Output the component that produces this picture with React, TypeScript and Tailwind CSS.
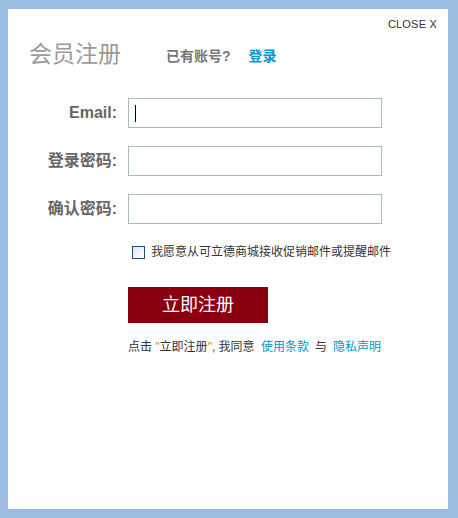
import React from 'react';

const font = { fontFamily: '"Liberation Sans", "Noto Sans CJK SC", sans-serif' };

const Field = ({ label, focused }: { label: string; focused?: boolean }) => (
  <div className="flex items-center h-[30px]">
    <label className="w-[120px] pr-[11px] text-right text-[16px] font-bold text-[#666666] leading-none">
      {label}
    </label>
    <div className="relative w-[254px] h-[30px] border border-[#a9bcbd] bg-white">
      {focused && <span className="absolute left-[6px] top-[6px] w-px h-[17px] bg-black" />}
    </div>
  </div>
);

export default function App() {
  return (
    <div className="w-[458px] h-[518px] bg-[#9bbde1] pt-[9px] pl-[8px] pr-[10px] pb-[9px]" style={font}>
      <div className="w-full h-full bg-white flex flex-col">
        {/* close */}
        <div className="flex justify-end pr-[11px] pt-[9px]">
          <button className="text-[11px] leading-[13px] text-[#333333] tracking-[0.2px]">CLOSE X</button>
        </div>

        {/* title row */}
        <div className="flex items-end pl-[21px] mt-[7px] h-[30px]">
          <h1 className="text-[23px] leading-[28px] text-[#9a9a9a] font-normal">会员注册</h1>
          <span className="ml-[45px] mb-[3px] text-[14px] font-bold text-[#777777] leading-[18px]">已有账号?</span>
          <a className="ml-[18px] mb-[3px] text-[14px] font-bold text-[#0098cc] leading-[18px]">登录</a>
        </div>

        {/* fields */}
        <div className="flex flex-col gap-[18px] mt-[30px]">
          <Field label="Email:" focused />
          <Field label="登录密码:" />
          <Field label="确认密码:" />
        </div>

        {/* newsletter */}
        <div className="flex items-center mt-[21px] ml-[124px] h-[14px]">
          <span className="w-[13px] h-[13px] border border-[#1f4e79] bg-gradient-to-br from-[#e6e6e6] to-white" />
          <span className="ml-[6px] text-[12px] text-[#333333] leading-none">我愿意从可立德商城接收促销邮件或提醒邮件</span>
        </div>

        {/* submit */}
        <div className="ml-[120px] mt-[28px]">
          <button className="w-[140px] h-[36px] bg-[#8b0011] text-white text-[18px] leading-none">立即注册</button>
        </div>

        <p className="ml-[120px] mt-[17px] text-[12px] leading-[14px] text-[#333333]">
          点击 <span className="text-[#c8883c]">"</span>立即注册<span className="text-[#c8883c]">"</span>, 我同意{' '}
          <a className="ml-[3px] text-[#0098cc]">使用条款</a>
          <span className="ml-[6px]">与</span>
          <a className="ml-[6px] text-[#0098cc]">隐私声明</a>
        </p>
      </div>
    </div>
  );
}
